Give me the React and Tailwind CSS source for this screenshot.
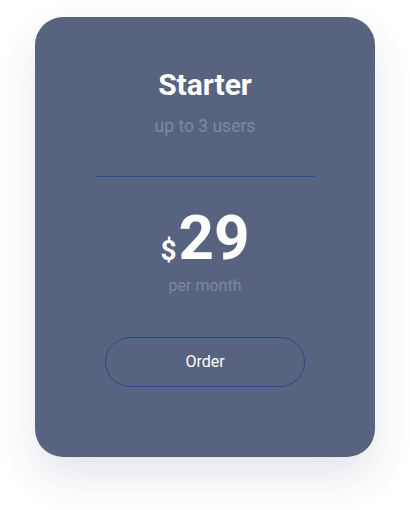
import React from 'react';

export default function App() {
  return (
    <div className="w-[410px] h-[510px] bg-white flex justify-center pt-[17px]" style={{ fontFamily: 'Roboto, sans-serif' }}>
      <div className="w-[340px] h-[440px] rounded-[28px] bg-[#58637f] shadow-[0_20px_40px_rgba(40,50,90,0.12)] flex flex-col items-center pt-[50px]">
        <h2 className="text-[30px] leading-[36px] font-bold text-white">Starter</h2>
        <p className="mt-[12px] text-[17.5px] leading-[22px] text-[#7c87a8]">up to 3 users</p>
        <div className="mt-[39px] w-[219px] h-px bg-[#2c4690]" />
        <div className="mt-[30px] flex items-end text-white font-bold leading-none">
          <span className="text-[28px] mb-[4px] mr-[2px]">$</span>
          <span className="text-[62px]">29</span>
        </div>
        <p className="mt-[7px] text-[16px] leading-[19px] text-[#7c87a8]">per month</p>
        <button className="mt-[42px] w-[200px] h-[50px] rounded-full border border-[#2c4690] text-white text-[16px]">Order</button>
      </div>
    </div>
  );
}
